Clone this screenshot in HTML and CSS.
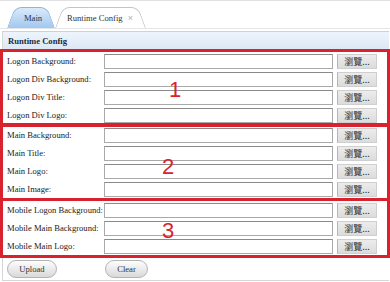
FILE: index.html
```html
<!DOCTYPE html>
<html lang="en">
<head>
  <meta charset="UTF-8">
  <title>Runtime Config</title>
  <link rel="stylesheet" href="styles.css">
</head>
<body>
  <div class="tabs">
    <div class="tab">Main</div>
    <div class="tab active">Runtime Config <span class="close">&times;</span></div>
  </div>

  <div class="panel">
    <div class="panel-title">Runtime Config</div>

    <div class="group">
      <div class="row"><label>Logon Background:</label><input type="text"><button class="browse">瀏覽...</button></div>
      <div class="row"><label>Logon Div Background:</label><input type="text"><button class="browse">瀏覽...</button></div>
      <div class="row"><label>Logon Div Title:</label><input type="text"><button class="browse">瀏覽...</button></div>
      <div class="row"><label>Logon Div Logo:</label><input type="text"><button class="browse">瀏覽...</button></div>
      <span class="mark mark-1">1</span>
    </div>

    <div class="group second">
      <div class="row"><label>Main Background:</label><input type="text"><button class="browse">瀏覽...</button></div>
      <div class="row"><label>Main Title:</label><input type="text"><button class="browse">瀏覽...</button></div>
      <div class="row"><label>Main Logo:</label><input type="text"><button class="browse">瀏覽...</button></div>
      <div class="row"><label>Main Image:</label><input type="text"><button class="browse">瀏覽...</button></div>
      <span class="mark mark-2">2</span>
    </div>

    <div class="group third">
      <div class="row"><label>Mobile Logon Background:</label><input type="text"><button class="browse">瀏覽...</button></div>
      <div class="row"><label>Mobile Main Background:</label><input type="text"><button class="browse">瀏覽...</button></div>
      <div class="row"><label>Mobile Main Logo:</label><input type="text"><button class="browse">瀏覽...</button></div>
      <span class="mark mark-3">3</span>
    </div>

    <div class="actions">
      <button class="pill upload">Upload</button>
      <button class="pill clear">Clear</button>
    </div>
  </div>
</body>
</html>
```

FILE: styles.css
```css
body {
  margin: 0;
  font-family: 'Liberation Serif', 'Times New Roman', serif;
  font-size: 8.6px;
  color: #1a1a1a;
  background: #fff;
}
.tabs {
  display: flex;
  align-items: flex-end;
  height: 29px;
  padding-left: 7px;
  border-top: 1px solid #e2e2e2;
  border-bottom: 1px solid #e6e6e6;
  box-sizing: border-box;
}
.tab {
  position: relative;
  z-index: 1;
  width: 48px;
  height: 21px;
  line-height: 22px;
  padding-left: 4px;
  box-sizing: border-box;
  text-align: center;
  color: #1d3355;
}
/* each tab is drawn as two skewed halves to get the slanted sides */
.tab::before,
.tab::after {
  content: '';
  position: absolute;
  top: 0;
  bottom: 0;
  z-index: -1;
  border-top: 1px solid #8db2e3;
  background: linear-gradient(#dbeafa, #a0c8f0);
  transform-origin: bottom;
}
.tab::before {
  left: 0;
  right: 45%;
  border-left: 1px solid #8db2e3;
  border-radius: 7px 0 0 0;
  transform: skewX(-20deg);
}
.tab::after {
  left: 45%;
  right: 0;
  border-right: 1px solid #8db2e3;
  border-radius: 0 7px 0 0;
  transform: skewX(20deg);
}
.tab.active {
  width: 90px;
  padding-left: 12px;
  text-align: left;
  color: #333;
  z-index: 0;
}
.tab.active::before,
.tab.active::after {
  background: #fff;
  border-color: #c4c4c4;
}
.close {
  color: #9fb4cc;
  margin-left: 3px;
  font-family: 'Liberation Sans', sans-serif;
  font-size: 9px;
}
.panel {
  margin: 2px 0 0 2px;
  width: 387px;
  border-left: 1px solid #d6d6d6;
  border-bottom: 1px solid #d6d6d6;
  box-sizing: border-box;
  height: 250px;
}
.panel-title {
  height: 18px;
  line-height: 18px;
  padding-left: 5px;
  font-weight: bold;
  color: #1c2a3a;
  background: linear-gradient(#eef4fc, #dde8f5);
  border-top: 1px solid #c7d3e2;
  box-sizing: border-box;
}
.group {
  position: relative;
  margin-left: -3px;
  margin-right: -1px;
  border: 3px solid #d8232f;
}
.group.second {
  margin-top: -4px;
}
.group.third {
  margin-top: -3px;
}
.row {
  display: flex;
  align-items: center;
  height: 18px;
  padding-left: 4px;
}
.row label {
  width: 97px;
  white-space: nowrap;
}
.row input {
  width: 229px;
  height: 15px;
  box-sizing: border-box;
  margin: 0;
  border: 1px solid #a9a9a9;
  border-top-color: #8a8a8a;
  background: #fff;
}
.browse {
  margin-left: 4px;
  width: 40px;
  height: 15px;
  padding: 0;
  border: 1px solid #cfcfcf;
  border-left-color: #b5b5b5;
  background: linear-gradient(#ececec, #dcdcdc);
  color: #333;
  font-family: 'Noto Sans CJK TC', 'Liberation Sans', sans-serif;
  font-size: 9px;
  line-height: 13px;
}
.mark {
  position: absolute;
  color: #d8232f;
  font-family: 'Liberation Sans', Arial, sans-serif;
  font-size: 22px;
  line-height: 1;
}
.mark-1 {
  left: 166px;
  top: 27px;
}
.mark-2 {
  left: 159px;
  top: 30px;
}
.mark-3 {
  left: 159px;
  top: 19px;
}
.actions {
  display: flex;
  gap: 48px;
  padding: 2px 0 0 4px;
}
.pill {
  height: 18px;
  padding: 0;
  border: 1px solid #b3b3b3;
  border-radius: 9px;
  background: linear-gradient(#fdfdfd, #d9d9d9);
  color: #333;
  font-family: 'Liberation Serif', 'Times New Roman', serif;
  font-size: 8.6px;
}
.upload {
  width: 50px;
}
.clear {
  width: 43px;
}
```
